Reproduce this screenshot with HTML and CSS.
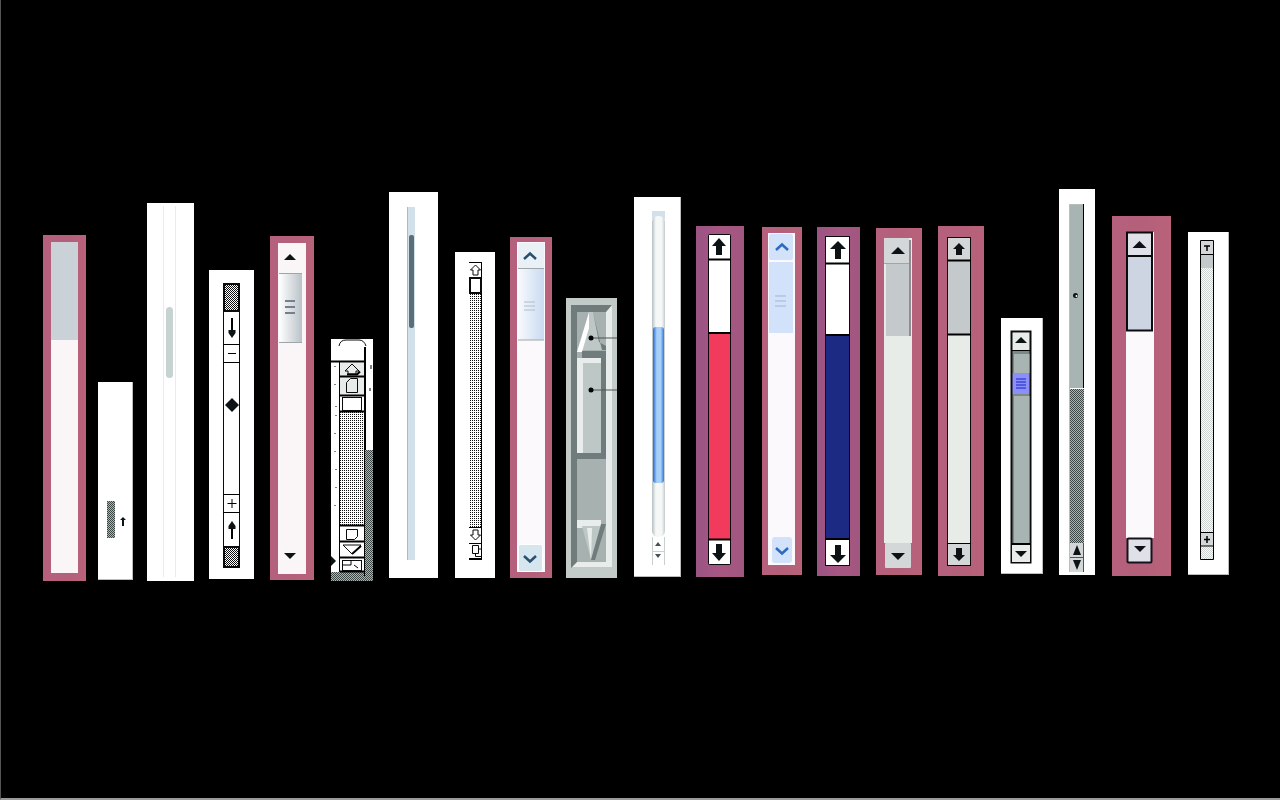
FILE: index.html
```html
<!DOCTYPE html>
<html>
	<head>
		<meta charset="UTF-8">
		<title>Scrollbars</title>
		<link rel="stylesheet" href="styles.css">
	</head>
	<body>
		<svg class="defs" width="0" height="0">
			<defs>
				<pattern id="checker" width="2" height="2" patternUnits="userSpaceOnUse">
					<rect width="2" height="2" fill="#fff"/>
					<rect width="1" height="1" fill="#111"/>
					<rect x="1" y="1" width="1" height="1" fill="#111"/>
				</pattern>
				<pattern id="dots" width="2" height="2" patternUnits="userSpaceOnUse">
					<rect width="2" height="2" fill="#fff"/>
					<rect width="1" height="1" fill="#111"/>
				</pattern>
				<pattern id="greyCheck" width="2" height="2" patternUnits="userSpaceOnUse">
					<rect width="2" height="2" fill="#a9b6b3"/>
					<rect width="1" height="1" fill="#3c4644"/>
					<rect x="1" y="1" width="1" height="1" fill="#3c4644"/>
				</pattern>
				<pattern id="lightCheck" width="2" height="2" patternUnits="userSpaceOnUse">
					<rect width="2" height="2" fill="#fbfcfb"/>
					<rect width="1" height="1" fill="#ccd3d0"/>
					<rect x="1" y="1" width="1" height="1" fill="#ccd3d0"/>
				</pattern>
				<linearGradient id="thumbGrey" x1="0" x2="1" y1="0" y2="0">
					<stop offset="0" stop-color="#fff"/>
					<stop offset="1" stop-color="#b9c2c8"/>
				</linearGradient>
				<linearGradient id="thumbBlue" x1="0" x2="1" y1="0" y2="0">
					<stop offset="0" stop-color="#f8fafc"/>
					<stop offset="1" stop-color="#c9daf2"/>
				</linearGradient>
				<linearGradient id="tube" x1="0" x2="1" y1="0" y2="0">
					<stop offset="0" stop-color="#b4bfc1"/>
					<stop offset="0.3" stop-color="#f6f8f8"/>
					<stop offset="0.75" stop-color="#f6f8f8"/>
					<stop offset="1" stop-color="#c3cccd"/>
				</linearGradient>
				<linearGradient id="tubeBlue" x1="0" x2="1" y1="0" y2="0">
					<stop offset="0" stop-color="#2468d2"/>
					<stop offset="0.35" stop-color="#a8d0f8"/>
					<stop offset="0.7" stop-color="#a8d0f8"/>
					<stop offset="1" stop-color="#2f76da"/>
				</linearGradient>
			</defs>
		</svg>

		<div class="shelf">

			<!-- 1 plain pink -->
			<div class="strip s1 pink">
				<svg viewBox="43 235 43 346" width="43" height="346">
					<rect x="51" y="242" width="27" height="331" class="c-track"/>
					<rect x="51" y="242" width="27" height="98" class="c-thumb-soft"/>
				</svg>
			</div>

			<!-- 2 tiny thumb -->
			<div class="strip s2 paper edged">
				<svg viewBox="98 382 35 198" width="35" height="198">
					<rect x="107" y="501" width="8" height="37" fill="url(#greyCheck)"/>
					<path d="M123 517l3 3h-2v6h-2v-6h-2z" class="c-ink"/>
				</svg>
			</div>

			<!-- 3 pale rounded -->
			<div class="strip s3 paper">
				<svg viewBox="147 203 47 378" width="47" height="378">
					<rect x="163" y="206" width="1" height="371" class="c-rule"/>
					<rect x="175" y="206" width="1" height="371" class="c-rule"/>
					<rect x="166" y="307" width="7" height="71" rx="3.5" class="c-pale"/>
				</svg>
			</div>

			<!-- 4 black and white, checker ends -->
			<div class="strip s4 paper">
				<svg viewBox="209 270 45 309" width="45" height="309">
					<rect x="223.500" y="283.500" width="16" height="283" class="c-box"/>
					<rect x="224" y="284" width="15" height="27" fill="url(#checker)"/>
					<rect x="224" y="547" width="15" height="20" fill="url(#checker)"/>
					<rect x="224" y="284" width="15" height="27" class="c-box-thick"/>
					<rect x="224" y="547" width="15" height="20" class="c-box-thick"/>
					<path d="M223 344.500h17M223 362.500h17M223 494.500h17M223 512.500h17" class="c-thin"/>
					<path d="M232 318v12" class="c-line"/>
					<path d="M228.500 330h7v3l-3.500 5-3.500-5z" class="c-ink"/>
					<path d="M228 353.500h8M232 499v9M227.500 503.500h9" class="c-thin"/>
					<path d="M232 398l7 7-7 7-7-7z" class="c-ink"/>
					<path d="M232 521l3.500 5v3h-7v-3z" class="c-ink"/>
					<path d="M232 529v10" class="c-line"/>
				</svg>
			</div>

			<!-- 5 pink, grey thumb with grip -->
			<div class="strip s5 pink">
				<svg viewBox="270 236 44 344" width="44" height="344">
					<rect x="278" y="243" width="28" height="331" class="c-track"/>
					<rect x="279" y="273" width="23" height="70" fill="url(#thumbGrey)"/>
					<path d="M279 273.500h23M279 342.500h23" class="c-edge"/>
					<path d="M285 301h10M285 307h10M285 313h10" class="c-grip"/>
					<path d="M290 254l6 6h-12z" class="c-ink"/>
					<path d="M284 553h12l-6 6z" class="c-ink"/>
				</svg>
			</div>

			<!-- 6 old style window edge -->
			<div class="strip s6 dark-paper">
				<svg viewBox="331 339 42 242" width="42" height="242">
					<rect x="331" y="339" width="42" height="242" fill="url(#greyCheck)"/>
					<rect x="331" y="339" width="42" height="111" class="c-white"/>
					<rect x="331" y="450" width="34" height="122" class="c-white"/>
					<rect x="339" y="362" width="1" height="210" class="c-black"/>
					<rect x="364" y="347" width="2" height="103" class="c-black"/>
					<rect x="364" y="450" width="1" height="126" class="c-black"/>
					<rect x="340" y="412" width="24" height="113" fill="url(#dots)"/>
					<rect x="340" y="363" width="24" height="32" class="c-btn-white"/>
					<path d="M331 361.500h33M340 376.500h24M340 395.500h24M340 411.500h24M340 525.500h24M340 541.500h24M340 557.500h24M340 571.500h24" class="c-line"/>
					<rect x="342.500" y="397.500" width="19" height="13" class="c-box"/>
					<path d="M339 346q1-6 7-6h13q5 0 7 6" class="c-box"/>
					<path d="M345 371l7-7 7 7h-3v3h-8v-3z" class="c-box"/>
					<path d="M347 374.500h10l3-3" class="c-line"/>
					<path d="M346.500 392.500v-10l4-4h7v14z" class="c-box"/>
					<path d="M346.500 529.500h11v7l-3 3h-8z" class="c-box"/>
					<path d="M343 545h18l-9 9z" class="c-box"/>
					<path d="M352 554l9-8" class="c-line"/>
					<rect x="342.500" y="560.500" width="19" height="10" class="c-box"/>
					<path d="M351 560v5h-8M354 565l4 3" class="c-thin"/>
					<path d="M331 556l5 5-5 5z" class="c-ink"/>
					<path d="M335 366v1M335 384v1M336 406v1M336 415v1M335 433v1M335 451v1M336 469v1M336 487v1M335 505v1" class="c-thin"/>
					<path d="M371 365v4M370 388v3" class="c-thin"/>
				</svg>
			</div>

			<!-- 7 blue track, slim dark thumb -->
			<div class="strip s7 paper">
				<svg viewBox="389 192 49 386" width="49" height="386">
					<rect x="407" y="207" width="8" height="353" class="c-sky"/>
					<rect x="407" y="207" width="1" height="353" class="c-sky-edge"/>
					<rect x="409" y="235" width="5" height="93" rx="2" class="c-slate"/>
				</svg>
			</div>

			<!-- 8 dotted outline arrows -->
			<div class="strip s8 paper">
				<svg viewBox="455 252 40 326" width="40" height="326">
					<rect x="469" y="294" width="12" height="233" fill="url(#dots)"/>
					<path d="M481.500 262v297M469 262.500h13M469 527.500h13M469 543.500h13" class="c-thin"/>
					<rect x="470" y="278" width="11" height="15" class="c-white-box"/>
					<path d="M475.500 265l5 5h-2.500v5h-5v-5h-2.500z" class="c-box"/>
					<path d="M473 530h5v5h2.500l-5 5-5-5h2.500z" class="c-box"/>
					<path d="M472.500 545.500h6v8h-6zM478 549h3.500M475.500 553.500v3h6" class="c-box"/>
					<rect x="469" y="558" width="13" height="2" class="c-black"/>
				</svg>
			</div>

			<!-- 9 pink, blue chevrons -->
			<div class="strip s9 pink">
				<svg viewBox="510 237 42 341" width="42" height="341">
					<rect x="517" y="242" width="28" height="330" class="c-track-white"/>
					<rect x="518" y="243" width="26" height="25" class="c-btn-pale"/>
					<rect x="518" y="269" width="26" height="71" fill="url(#thumbBlue)"/>
					<path d="M518 268.500h26M518 340h26" class="c-edge"/>
					<path d="M524 302h11M524 306h11M524 310h11" class="c-grip-pale"/>
					<path d="M524 259l6-5.500 6 5.500" class="c-chevron-dark"/>
					<rect x="518.500" y="544.500" width="24" height="27" rx="2" class="c-btn-teal"/>
					<path d="M524 556l6 5.500 6-5.500" class="c-chevron-dark"/>
				</svg>
			</div>

			<!-- 10 chiselled grey -->
			<div class="strip s10 stone">
				<svg viewBox="566 298 51 280" width="51" height="280">
					<rect x="571" y="305" width="41" height="262" class="c-bevel-light"/>
					<path d="M571 305h41l-6 7h-29v250l-6 6z" class="c-bevel-dark"/>
					<rect x="577" y="312" width="29" height="250" class="c-stone"/>
					<path d="M589 312h4l9 38h-25l6-14h3z" class="c-stone-light"/>
					<path d="M589 312l-12 40h5l7-24z" class="c-white"/>
					<path d="M593 312l9 38h4v-4l-7-4z" class="c-stone-dark"/>
					<path d="M582 351h24v7h-24z" class="c-stone-dark"/>
					<path d="M591 338h26" class="c-thin-dark"/>
					<circle cx="591" cy="338" r="2.500" class="c-black"/>
					<rect x="577" y="358" width="29" height="101" class="c-stone-dark"/>
					<rect x="577" y="358" width="24" height="95" class="c-bevel-light"/>
					<rect x="583" y="363" width="18" height="90" class="c-stone-light"/>
					<path d="M591 390h26" class="c-thin-dark"/>
					<circle cx="591" cy="390" r="2.500" class="c-black"/>
					<rect x="577" y="520" width="24" height="8" class="c-bevel-light"/>
					<path d="M582 526h19l-10 34z" class="c-stone-light"/>
					<path d="M587 528l4 32 1-32z" class="c-bevel-light"/>
					<path d="M601 524h5l-11 36h-4z" class="c-stone-dark"/>
				</svg>
			</div>

			<!-- 11 glossy tube -->
			<div class="strip s11 paper edged">
				<svg viewBox="634 197 47 380" width="47" height="380">
					<rect x="652" y="211" width="13" height="8" class="c-sky"/>
					<rect x="652" y="216" width="13" height="321" rx="6" fill="url(#tube)"/>
					<rect x="653" y="327" width="11" height="156" rx="3" fill="url(#tubeBlue)"/>
					<path d="M652.500 537v28M664.500 537v28M652 551.500h13" class="c-rule-dark"/>
					<path d="M658 542l3 4h-6zM655 554h6l-3 4z" class="c-grip-fill"/>
				</svg>
			</div>

			<!-- 12 red -->
			<div class="strip s12 plum">
				<svg viewBox="696 226 48 351" width="48" height="351">
					<rect x="709" y="235" width="21" height="329" class="c-white"/>
					<rect x="709" y="333" width="21" height="207" class="c-red"/>
					<rect x="708.500" y="234.500" width="22" height="330" rx="1" class="c-box"/>
					<path d="M708 259.500h23M708 333h23M708 539.500h23" class="c-line"/>
					<path d="M719 238l7 8h-4v9h-6v-9h-4z" class="c-ink"/>
					<path d="M716 544h6v9h4l-7 8-7-8h4z" class="c-ink"/>
				</svg>
			</div>

			<!-- 13 light blue -->
			<div class="strip s13 pink">
				<svg viewBox="762 227 40 348" width="40" height="348">
					<rect x="768" y="233" width="27" height="332" class="c-track-white"/>
					<rect x="769" y="234" width="24" height="26" rx="2" class="c-btn-blue"/>
					<rect x="769" y="262" width="24" height="71" class="c-btn-blue"/>
					<path d="M775 296h11M775 301h11M775 306h11" class="c-grip-blue"/>
					<path d="M776 250l6-5.500 6 5.500" class="c-chevron-blue"/>
					<rect x="772" y="537" width="20" height="26" rx="3" class="c-btn-blue"/>
					<path d="M776 548l6 5.500 6-5.500" class="c-chevron-blue"/>
				</svg>
			</div>

			<!-- 14 navy -->
			<div class="strip s14 plum">
				<svg viewBox="817 227 43 349" width="43" height="349">
					<rect x="826" y="237" width="23" height="328" class="c-white"/>
					<rect x="826" y="335" width="23" height="204" class="c-navy"/>
					<rect x="825.500" y="236.500" width="24" height="329" class="c-box"/>
					<path d="M825 263.500h25M825 335h25M825 539h25" class="c-line"/>
					<path d="M838 241l8 8h-5v10h-6v-10h-5z" class="c-ink"/>
					<path d="M835 545h6v10h5l-8 8-8-8h5z" class="c-ink"/>
				</svg>
			</div>

			<!-- 15 soft grey, no outline -->
			<div class="strip s15 pink">
				<svg viewBox="876 228 46 347" width="46" height="347">
					<rect x="884" y="238" width="28" height="305" class="c-track-mint"/>
					<rect x="884" y="238" width="25" height="25" class="c-btn-grey"/>
					<rect x="886" y="264" width="23" height="72" class="c-thumb-grey"/>
					<path d="M884 263.500h25" class="c-edge"/>
					<rect x="909" y="240" width="2" height="96" class="c-shade"/>
					<path d="M898 247l7 7h-14z" class="c-ink"/>
					<rect x="885" y="543" width="26" height="25" rx="1" class="c-btn-grey"/>
					<path d="M891 553h14l-7 7z" class="c-ink"/>
				</svg>
			</div>

			<!-- 16 grey, black outline -->
			<div class="strip s16 pink">
				<svg viewBox="938 226 46 350" width="46" height="350">
					<rect x="948" y="238" width="22" height="22" class="c-btn-grey"/>
					<rect x="948" y="261" width="22" height="73" class="c-thumb-grey"/>
					<rect x="948" y="335" width="22" height="208" class="c-track-mint"/>
					<rect x="948" y="544" width="22" height="21" class="c-btn-grey"/>
					<rect x="947.500" y="237.500" width="23" height="328" class="c-box"/>
					<path d="M947 260.500h24M947 334.500h24" class="c-line"/>
					<path d="M947 543.500h24" class="c-thin"/>
					<path d="M959 243l6 6h-3v6h-6v-6h-3z" class="c-ink"/>
					<path d="M956 548h6v7h3l-6 6-6-6h3z" class="c-ink"/>
				</svg>
			</div>

			<!-- 17 grey track, blue thumb -->
			<div class="strip s17 paper edged">
				<svg viewBox="1001 318 42 256" width="42" height="256">
					<rect x="1012" y="333" width="19" height="18" class="c-btn-white"/>
					<rect x="1012" y="351" width="19" height="192" class="c-steel"/>
					<rect x="1012" y="351" width="2" height="192" class="c-steel-dark"/>
					<rect x="1029" y="351" width="1" height="192" class="c-bevel-light"/>
					<path d="M1012 351h19v3h-19zM1012 394h19v2h-19z" class="c-steel-dark"/>
					<rect x="1012" y="373" width="19" height="21" class="c-violet"/>
					<path d="M1016 379h10M1016 382h10M1016 385h10M1016 388h10" class="c-violet-line"/>
					<rect x="1011.500" y="331.500" width="19" height="231" class="c-box-thick"/>
					<rect x="1011" y="350" width="20" height="1" class="c-black"/>
					<rect x="1011" y="543" width="20" height="2" class="c-black"/>
					<rect x="1012" y="545" width="18" height="17" class="c-btn-white"/>
					<path d="M1021 337l6 6h-12z" class="c-ink"/>
					<path d="M1015 551h12l-6 6z" class="c-ink"/>
				</svg>
			</div>

			<!-- 18 steel with dither, paired buttons -->
			<div class="strip s18 paper">
				<svg viewBox="1059 189 36 386" width="36" height="386">
					<rect x="1069" y="204" width="15" height="184" class="c-steel"/>
					<path d="M1069.500 204v368M1069 204.500h15" class="c-rule-mid"/>
					<path d="M1083.500 204v184" class="c-thin"/>
					<rect x="1070" y="389" width="14" height="154" fill="url(#greyCheck)"/>
					<circle cx="1075.500" cy="295.500" r="2.500" class="c-ink"/>
					<circle cx="1076.500" cy="296" r="1" class="c-white"/>
					<rect x="1070" y="543" width="14" height="14" class="c-btn-grey"/>
					<rect x="1070" y="558" width="14" height="14" class="c-btn-grey"/>
					<path d="M1083.500 543v29M1070 557.500h14" class="c-thin-dark"/>
					<path d="M1077 545l4 10h-8z" class="c-ink"/>
					<path d="M1073 560h8l-4 10z" class="c-ink"/>
				</svg>
			</div>

			<!-- 19 wide pink, lilac thumb -->
			<div class="strip s19 pink">
				<svg viewBox="1112 216 59 360" width="59" height="360">
					<rect x="1126" y="232" width="28" height="306" class="c-track-white"/>
					<rect x="1127" y="233" width="25" height="23" rx="1" class="c-btn-lilac"/>
					<rect x="1127" y="257" width="25" height="74" class="c-thumb-lilac"/>
					<path d="M1127 232.500h25v98h-25zM1127 256h25" class="c-box-thick"/>
					<path d="M1139.500 241l7 7h-14z" class="c-ink"/>
					<rect x="1127.500" y="538.500" width="24" height="24" rx="1" class="c-btn-lilac-box"/>
					<path d="M1134 546h12l-6 6z" class="c-ink"/>
				</svg>
			</div>

			<!-- 20 small buttons, light dither -->
			<div class="strip s20 paper edged">
				<svg viewBox="1188 232 41 343" width="41" height="343">
					<rect x="1200" y="240" width="14" height="320" fill="url(#lightCheck)"/>
					<rect x="1201" y="241" width="12" height="13" class="c-btn-grey"/>
					<rect x="1201" y="255" width="12" height="13" class="c-thumb-grey"/>
					<rect x="1201" y="533" width="12" height="13" class="c-btn-grey"/>
					<path d="M1200.500 240.500h13v319h-13zM1200 254.500h14M1200 532.500h14M1200 546h14" class="c-thin"/>
					<path d="M1204 246h6M1207 246v5" class="c-line-mid"/>
					<path d="M1207 536v7M1204 539.500h6" class="c-line-mid"/>
				</svg>
			</div>

		</div>
	</body>
</html>
```

FILE: styles.css
```css
* {
	margin: 0;
	padding: 0;
}

body {
	width: 1280px;
	height: 800px;
	overflow: hidden;
	background: #000;
}

.defs {
	display: block;
	height: 0;
}

.shelf {
	display: flex;
	align-items: flex-start;
	box-sizing: border-box;
	width: 1280px;
	height: 800px;
	border-left: 1px solid #555;
	border-bottom: 2px solid #9a9a9a;
}

.strip svg {
	display: block;
}

/* panel colours */
.paper {
	background: #fff;
}
.edged {
	box-shadow: inset -1px -1px 0 #bcbcbc;
}
.dark-paper {
	background: #000;
}
.pink {
	background: linear-gradient(90deg, #b5607e, #b4607a 50%, #b9627a);
}
.plum {
	background: linear-gradient(90deg, #9a5484, #a85683 50%, #a0577f);
}
.stone {
	background: #c3cbc9;
}

/* where each strip sits on the black: space before it, and its drop */
.s1 { margin: 235px 0 0 42px; width: 43px; height: 346px; }
.s2 { margin: 382px 0 0 12px; width: 35px; height: 198px; }
.s3 { margin: 203px 0 0 14px; width: 47px; height: 378px; }
.s4 { margin: 270px 0 0 15px; width: 45px; height: 309px; }
.s5 { margin: 236px 0 0 16px; width: 44px; height: 344px; }
.s6 { margin: 339px 0 0 17px; width: 42px; height: 242px; }
.s7 { margin: 192px 0 0 16px; width: 49px; height: 386px; }
.s8 { margin: 252px 0 0 17px; width: 40px; height: 326px; }
.s9 { margin: 237px 0 0 15px; width: 42px; height: 341px; }
.s10 { margin: 298px 0 0 14px; width: 51px; height: 280px; }
.s11 { margin: 197px 0 0 17px; width: 47px; height: 380px; }
.s12 { margin: 226px 0 0 15px; width: 48px; height: 351px; }
.s13 { margin: 227px 0 0 18px; width: 40px; height: 348px; }
.s14 { margin: 227px 0 0 15px; width: 43px; height: 349px; }
.s15 { margin: 228px 0 0 16px; width: 46px; height: 347px; }
.s16 { margin: 226px 0 0 16px; width: 46px; height: 350px; }
.s17 { margin: 318px 0 0 17px; width: 42px; height: 256px; }
.s18 { margin: 189px 0 0 16px; width: 36px; height: 386px; }
.s19 { margin: 216px 0 0 17px; width: 59px; height: 360px; }
.s20 { margin: 232px 0 0 17px; width: 41px; height: 343px; }

/* plain fills */
.c-white { fill: #fff; }
.c-black { fill: #000; }
.c-ink { fill: #0d1214; }
.c-red { fill: #f23a5c; }
.c-navy { fill: #1d2a84; }
.c-sky { fill: #d2e0ea; }
.c-sky-edge { fill: #a9bccb; }
.c-slate { fill: #5b6e76; }
.c-pale { fill: #c6d3d1; }
.c-rule { fill: #e6eded; }
.c-track { fill: #faf6f8; }
.c-track-white { fill: #fcf9fc; }
.c-track-mint { fill: #e7ece9; }
.c-thumb-soft { fill: #cad2d7; }
.c-thumb-grey { fill: #c4cacc; }
.c-thumb-lilac { fill: #cdd5e3; }
.c-btn-grey { fill: #d3d7d8; }
.c-btn-white { fill: #e8ece9; }
.c-btn-pale { fill: #e9f0f6; }
.c-btn-teal { fill: #d6e6ee; stroke: #fff; stroke-width: 1; }
.c-btn-blue { fill: #d2e2fa; }
.c-btn-lilac { fill: #dfe0e8; }
.c-shade { fill: #8d8d92; }
.c-steel { fill: #a8b4b1; }
.c-steel-dark { fill: #7c8886; }
.c-violet { fill: #8b90f6; }
.c-stone { fill: #a7b1af; }
.c-stone-light { fill: #bdc7c5; }
.c-stone-dark { fill: #6f7c7b; }
.c-bevel-light { fill: #e8ecea; }
.c-bevel-dark { fill: #6f7c7b; }
.c-grip-fill { fill: #45505a; }

/* outlines */
.c-box,
.c-white-box,
.c-box-thick,
.c-btn-lilac-box {
	fill: none;
	stroke: #0b0b0d;
	stroke-width: 1;
}
.c-white-box {
	fill: #fff;
	stroke-width: 2;
}
.c-box-thick {
	stroke-width: 2;
}
.c-btn-lilac-box {
	fill: #dfe0e8;
	stroke: #15121c;
	stroke-width: 2;
}
.c-line,
.c-line-mid,
.c-thin,
.c-thin-dark,
.c-edge,
.c-grip,
.c-grip-pale,
.c-grip-blue,
.c-violet-line,
.c-rule-dark,
.c-rule-mid,
.c-chevron-dark,
.c-chevron-blue {
	fill: none;
}
.c-line { stroke: #000; stroke-width: 2; }
.c-line-mid { stroke: #000; stroke-width: 1.500; }
.c-thin { stroke: #000; stroke-width: 1; }
.c-thin-dark { stroke: #4c5554; stroke-width: 1; }
.c-edge { stroke: #9ea6aa; stroke-width: 1; }
.c-grip { stroke: #74808b; stroke-width: 2; }
.c-grip-pale { stroke: #aebccb; stroke-width: 1; }
.c-grip-blue { stroke: #9fb6cf; stroke-width: 1; }
.c-violet-line { stroke: #1b1fd0; stroke-width: 1; }
.c-rule-dark { stroke: #c9d0d0; stroke-width: 1; }
.c-rule-mid { stroke: #b5bfbc; stroke-width: 1; }
.c-chevron-dark { stroke: #2a5070; stroke-width: 2.500; }
.c-chevron-blue { stroke: #2d6ac4; stroke-width: 2.500; }
```
